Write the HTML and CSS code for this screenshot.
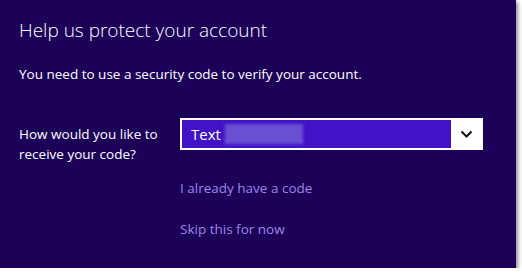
FILE: index.html
```html
<!DOCTYPE html>
<html lang="en">
<head>
    <meta charset="UTF-8">
    <title>Help us protect your account</title>
    <link rel="stylesheet" href="styles.css">
</head>
<body>

<div class="panel">
    <h1>Help us protect your account</h1>

    <p class="intro">You need to use a security code to verify your account.</p>

    <div class="form-row">
        <label for="method">How would you like to receive your code?</label>
        <div class="select">
            <span class="select-value">Text <span class="redacted"></span></span>
            <span class="select-arrow">
                <svg width="13" height="9" viewBox="0 0 13 9"><path d="M1.5 1.5 L6.5 6.5 L11.5 1.5" fill="none" stroke="#111" stroke-width="2"/></svg>
            </span>
        </div>
    </div>

    <div class="links">
        <a href="#">I already have a code</a>
        <a href="#">Skip this for now</a>
    </div>
</div>

</body>
</html>
```

FILE: styles.css
```css
body {
    margin: 0;
    background-color: #fff;
    font-family: 'Open Sans', 'Noto Sans', sans-serif;
}

.panel {
    width: 516px;
    height: 268px;
    box-sizing: border-box;
    background-color: #1c0058;
    color: #fff;
    padding: 16px 19px;
    box-shadow: 2px 2px 4px rgba(0, 0, 0, 0.45);
}

h1 {
    margin: 0;
    font-size: 19px;
    font-weight: 300;
    line-height: 28px;
}

.intro {
    margin: 20px 0 0;
    font-size: 13.5px;
    line-height: 20px;
}

.form-row {
    display: flex;
    align-items: flex-start;
    margin-top: 34px;
}

.form-row label {
    width: 161px;
    font-size: 13.5px;
    line-height: 20px;
    margin-top: 6px;
}

.select {
    display: flex;
    width: 303px;
    height: 32px;
    box-sizing: border-box;
    border: 2px solid #fff;
    background-color: #fff;
}

.select-value {
    flex: 1;
    display: flex;
    align-items: center;
    background-color: #4213c6;
    padding-left: 9px;
    font-size: 15px;
}

.redacted {
    display: inline-block;
    width: 78px;
    height: 20px;
    margin-left: 4px;
    background-color: #6a4fd2;
    filter: blur(1.5px);
}

.select-arrow {
    width: 30px;
    display: flex;
    align-items: center;
    justify-content: center;
}

.links {
    display: flex;
    flex-direction: column;
    margin-left: 161px;
    margin-top: 14px;
}

.links a {
    color: #9d87ea;
    text-decoration: none;
    font-size: 13.5px;
    line-height: 20px;
    margin-bottom: 21px;
}
```
